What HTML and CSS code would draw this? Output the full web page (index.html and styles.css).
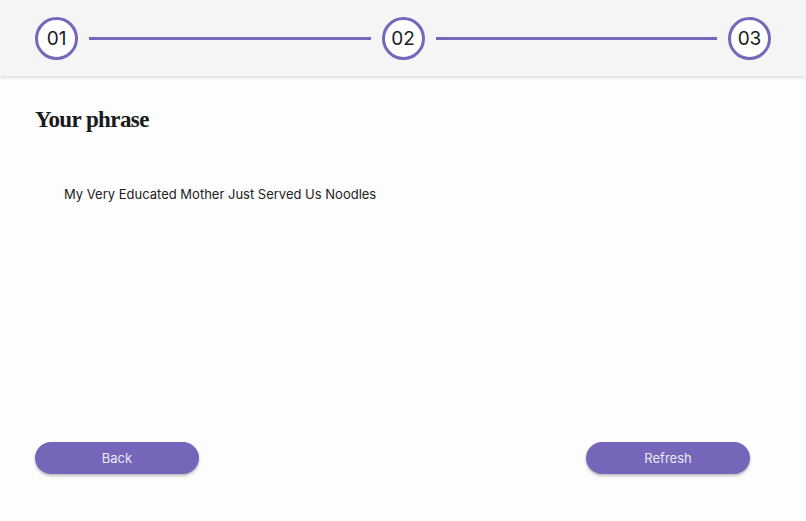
FILE: index.html
```html
<!DOCTYPE html>
<html>
<head>
<meta charset="utf-8">
<link rel="stylesheet" href="styles.css">
</head>
<body>
<header class="stepper">
  <div class="step">01</div>
  <div class="line"></div>
  <div class="step">02</div>
  <div class="line"></div>
  <div class="step">03</div>
</header>
<main class="content">
  <h1 class="title">Your phrase</h1>
  <p class="phrase">My Very Educated Mother Just Served Us Noodles</p>
  <div class="actions">
    <button class="btn">Back</button>
    <button class="btn">Refresh</button>
  </div>
</main>
</body>
</html>
```
FILE: styles.css
```css
* { box-sizing: border-box; }
html, body { margin: 0; padding: 0; }
body {
  width: 806px;
  height: 521px;
  background: #fdfdfd;
  font-family: Inter, "Noto Sans", sans-serif;
  color: #222;
  overflow: hidden;
}
.stepper {
  height: 76px;
  background: #f5f5f5;
  display: flex;
  align-items: center;
  padding: 0 35px;
  gap: 11px;
  box-shadow: 0 2px 3px rgba(0,0,0,0.12);
  position: relative;
}
.step {
  width: 43px;
  height: 43px;
  border: 3px solid #7767bb;
  border-radius: 50%;
  background: #fff;
  display: flex;
  align-items: center;
  justify-content: center;
  font-size: 19px;
  color: #1a1a1a;
  flex: none;
}
.line {
  flex: 1;
  height: 3px;
  background: #7767bb;
}
.content {
  padding: 0 56px 0 35px;
  display: flex;
  flex-direction: column;
  height: 445px;
}
.title {
  margin: 31px 0 0;
  font-family: "Liberation Serif", serif;
  font-weight: bold;
  font-size: 23px;
  letter-spacing: -0.6px;
  color: #1a1a1a;
  line-height: 26px;
}
.phrase {
  margin: 52px 0 0 29px;
  font-size: 13px;
  line-height: 18px;
  color: #222;
}
.actions {
  margin-top: auto;
  margin-bottom: 47px;
  display: flex;
  justify-content: space-between;
}
.btn {
  width: 164px;
  height: 32px;
  border: none;
  border-radius: 16px;
  background: #7566b9;
  color: #ece9f7;
  font-family: Inter, "Noto Sans", sans-serif;
  font-size: 13px;
  box-shadow: 0 2px 3px rgba(0,0,0,0.25);
}
```
